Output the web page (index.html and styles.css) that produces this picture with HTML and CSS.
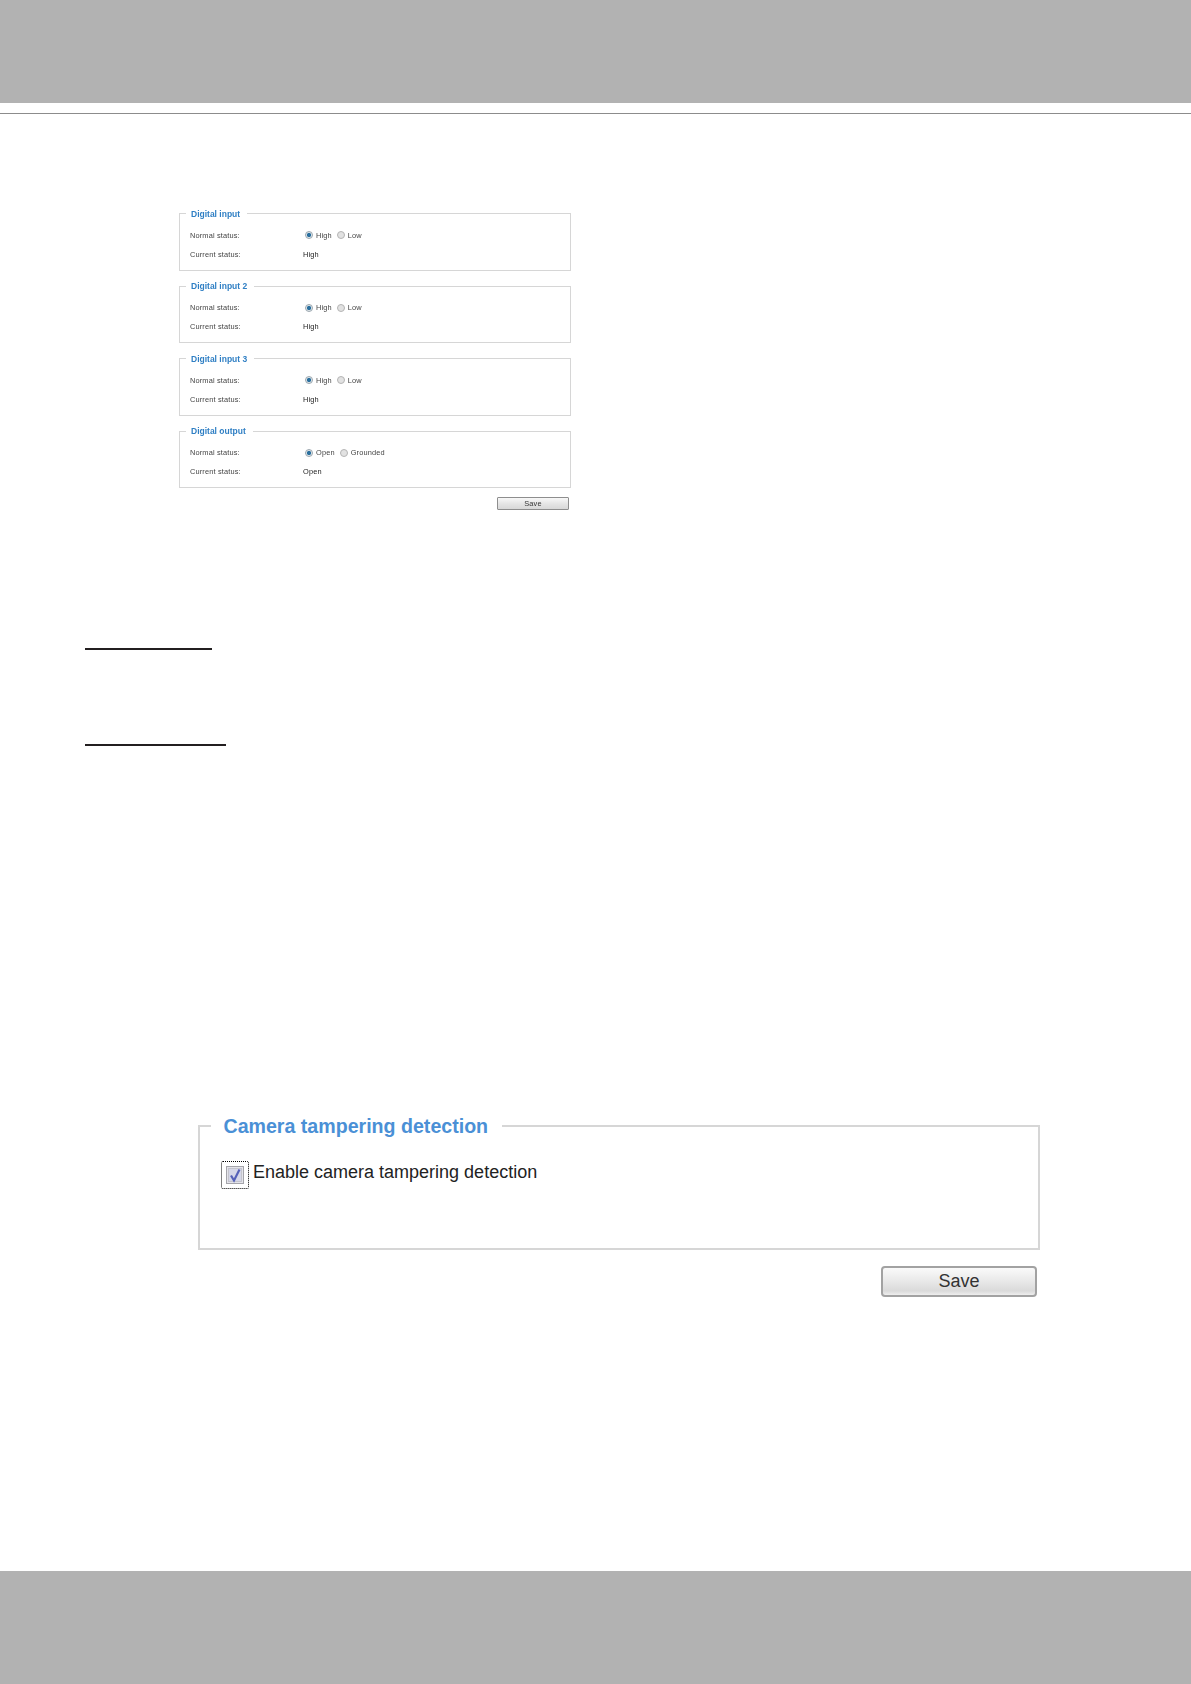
FILE: index.html
```html
<!DOCTYPE html>
<html lang="en">
<head>
<meta charset="utf-8">
<title>Digital input and camera tampering settings</title>
<link rel="stylesheet" href="styles.css">
</head>
<body>
<header class="top-band"></header>
<div class="top-rule"></div>
<main class="content">
  <section class="small-shot">
    <fieldset class="sm-set">
      <legend>Digital input</legend>
      <div class="sm-row"><span class="sm-label">Normal status:</span><span class="sm-opts"><i class="radio on"></i><span class="opt">High</span><i class="radio"></i><span>Low</span></span></div>
      <div class="sm-row"><span class="sm-label">Current status:</span><span class="sm-value">High</span></div>
    </fieldset>
    <fieldset class="sm-set">
      <legend>Digital input 2</legend>
      <div class="sm-row"><span class="sm-label">Normal status:</span><span class="sm-opts"><i class="radio on"></i><span class="opt">High</span><i class="radio"></i><span>Low</span></span></div>
      <div class="sm-row"><span class="sm-label">Current status:</span><span class="sm-value">High</span></div>
    </fieldset>
    <fieldset class="sm-set">
      <legend>Digital input 3</legend>
      <div class="sm-row"><span class="sm-label">Normal status:</span><span class="sm-opts"><i class="radio on"></i><span class="opt">High</span><i class="radio"></i><span>Low</span></span></div>
      <div class="sm-row"><span class="sm-label">Current status:</span><span class="sm-value">High</span></div>
    </fieldset>
    <fieldset class="sm-set">
      <legend>Digital output</legend>
      <div class="sm-row"><span class="sm-label">Normal status:</span><span class="sm-opts"><i class="radio on"></i><span class="opt">Open</span><i class="radio"></i><span>Grounded</span></span></div>
      <div class="sm-row"><span class="sm-label">Current status:</span><span class="sm-value">Open</span></div>
    </fieldset>
    <div class="sm-actions"><button class="sm-save" type="button">Save</button></div>
  </section>
  <div class="heading-rule rule-one"></div>
  <div class="heading-rule rule-two"></div>
  <section class="large-shot">
    <fieldset class="lg-set">
      <legend>Camera tampering detection</legend>
      <div class="lg-check">
        <span class="focus-box">
          <svg class="check" viewBox="0 0 18 18" width="18" height="18" aria-hidden="true">
            <rect x="0.5" y="0.5" width="17" height="17" fill="#e4e4ea" stroke="#a4a4aa"/>
            <rect x="2.5" y="2.5" width="13" height="13" fill="#d5d7e8" stroke="#c4c4cc"/>
            <path d="M5 9.5 L8 14.5 L13.5 3.5" fill="none" stroke="#5561b8" stroke-width="2.2"/>
          </svg>
        </span>
        <span class="check-label">Enable camera tampering detection</span>
      </div>
    </fieldset>
    <div class="lg-actions"><button class="lg-save" type="button">Save</button></div>
  </section>
</main>
<footer class="bottom-band"></footer>
</body>
</html>
```
FILE: styles.css
```css
html, body { margin: 0; padding: 0; background: #fff; }
body { height: 1684px; display: flex; flex-direction: column; font-family: "Liberation Sans", Arial, sans-serif; color: #222; overflow: hidden; }
.top-band { height: 103px; background: #b2b2b2; flex: none; }
.top-rule { height: 1px; margin-top: 10px; background: #8c8c8c; flex: none; }
.content { flex: 1; }
.bottom-band { height: 113px; background: #b2b2b2; flex: none; }

.small-shot { width: 392px; margin: 94.5px 0 0 179px; filter: blur(0.4px); }
.sm-set { box-sizing: border-box; height: 62px; margin: 0 0 10.6px; padding: 0 0 0 10px; border: 1px solid #d6d6d6; min-width: 0; }
.sm-set legend { margin-left: -4px; padding: 0 7px 0 5px; font-size: 8.5px; line-height: 10px; font-weight: 700; color: #2f7fc4; }
.sm-row { display: flex; align-items: center; height: 19px; font-size: 7.4px; color: #444; letter-spacing: 0.15px; }
.sm-row:first-of-type { margin-top: 7px; }
.sm-label { width: 113px; }
.sm-opts { display: flex; align-items: center; }
.sm-value { color: #222; }
.radio { width: 6px; height: 6px; margin: 0 2.5px; border-radius: 50%; border: 1px solid #b4b4b4; background: #e2e2e2; box-sizing: content-box; display: block; }
.radio.on { margin: 0 3.5px 0 1.5px; background: radial-gradient(circle, #2a6f9e 0 1.8px, #dfe6ea 2.4px); border-color: #9aa6ae; }
.opt { margin-right: 3px; }
.sm-actions { display: flex; justify-content: flex-end; padding-right: 2px; margin-top: -1.5px; }
.sm-save { box-sizing: border-box; width: 72px; height: 13px; padding: 0; border: 1px solid #8e8e8e; border-radius: 1px; background: linear-gradient(#f8f8f8, #e4e4e4 55%, #d8d8d8); font: 7.4px "Liberation Sans", Arial, sans-serif; letter-spacing: 0.2px; color: #333; }

.heading-rule { height: 2px; margin-left: 85px; background: #231f20; }
.rule-one { width: 127px; margin-top: 138px; }
.rule-two { width: 141px; margin-top: 94px; }

.large-shot { width: 842px; margin: 0 0 0 198px; }
.lg-set { box-sizing: border-box; height: 136px; margin: 368px 0 0; padding: 0 0 0 21px; border: 2px solid #d6d6d6; min-width: 0; }
.lg-set legend { margin-left: -10px; padding: 0 14px 0 12.5px; font-size: 19.6px; line-height: 24px; font-weight: 700; color: #4a90d6; }
.lg-check { display: flex; align-items: center; gap: 4px; margin-top: 22.5px; font-size: 18px; color: #222; }
.check-label { margin-bottom: 4px; }
.focus-box { box-sizing: border-box; display: flex; align-items: center; justify-content: center; width: 28px; height: 28px; border: 1px dotted #000; border-radius: 2px; }
.check { display: block; }
.lg-actions { display: flex; justify-content: flex-end; padding-right: 3px; margin-top: 16px; }
.lg-save { box-sizing: border-box; width: 156px; height: 31px; padding: 0; border: 2px solid #a2a2a2; border-radius: 4px; background: linear-gradient(#fafafa, #e8e8e8 50%, #dadada 85%, #eee); font: 18px "Liberation Sans", Arial, sans-serif; color: #333; }
```
